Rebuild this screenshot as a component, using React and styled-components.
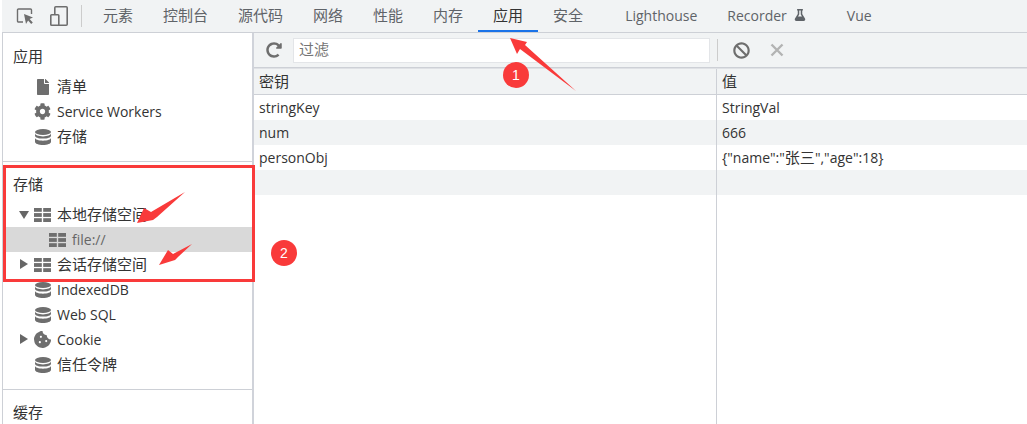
import React from 'react';
import styled, { createGlobalStyle } from 'styled-components';
import { FaBan, FaCog, FaCookieBite, FaFile, FaFlask, FaRedoAlt } from 'react-icons/fa';

const GlobalStyle = createGlobalStyle`
  html, body { margin: 0; padding: 0; background: #fff; }
  body {
    font-family: "Open Sans", "Noto Sans CJK SC", sans-serif;
    font-size: 14px;
    color: #333;
  }
`;

const tabs = [
  { label: '元素' }, { label: '控制台' }, { label: '源代码' }, { label: '网络' },
  { label: '性能' }, { label: '内存' }, { label: '应用', active: true }, { label: '安全' },
];

const Cjk = styled.span`
  font-size: 15px;
  margin-bottom: 2px;
`;

const rows = [
  { key: 'stringKey', value: 'StringVal' },
  { key: 'num', value: '666' },
  { key: 'personObj', value: <>{'{"name":"'}<Cjk>张三</Cjk>{'","age":18}'}</> },
  { key: '', value: '' },
];

const Page = styled.div`
  position: relative;
  width: 1027px;
  height: 424px;
  overflow: hidden;
  padding-left: 2px;
  box-sizing: border-box;
  display: flex;
  flex-direction: column;
`;

const TopBar = styled.div`
  height: 32px;
  flex: none;
  display: flex;
  align-items: center;
  padding-left: 6px;
  background: #f1f3f4;
  border-bottom: 1px solid #cdd0d6;
`;

const IconSlot = styled.div`
  width: ${(p) => p.$width || 34}px;
  height: 32px;
  flex: none;
  display: flex;
  align-items: center;
  justify-content: center;
`;

const ToolDivider = styled.div`
  width: 1px;
  height: 22px;
  flex: none;
  margin: ${(p) => p.$margin};
  background: #ccc;
`;

const Tab = styled.div`
  height: 32px;
  box-sizing: border-box;
  padding: 0 15px ${(p) => (p.$latin ? 0 : 2)}px;
  margin-left: ${(p) => p.$gap || 0}px;
  display: flex;
  align-items: center;
  gap: 7px;
  font-size: ${(p) => (p.$latin ? 14 : 15)}px;
  color: ${(p) => (p.$active ? '#333' : '#5f6368')};
  border-bottom: 2px solid ${(p) => (p.$active ? '#1a73e8' : 'transparent')};
`;

const Main = styled.div`
  flex: 1;
  min-height: 0;
  display: flex;
  border-left: 1px solid #cdd0d6;
`;

const Sidebar = styled.div`
  width: 249px;
  flex: none;
  border-right: 2px solid #d0d3da;
  overflow: hidden;
`;

const Section = styled.div`
  padding: ${(p) => p.$top}px 0 ${(p) => p.$bottom}px;
  border-bottom: ${(p) => (p.$last ? 'none' : '1px solid #cdd0d6')};
`;

const Heading = styled.div`
  height: 24px;
  line-height: 22px;
  padding-left: 10px;
  margin-bottom: 5px;
  font-size: 15px;
  color: #333;
`;

const TreeRow = styled.div`
  height: 25px;
  display: flex;
  align-items: center;
  padding-left: ${(p) => (p.$child ? 46 : 31)}px;
  position: relative;
  background: ${(p) => (p.$selected ? '#d9d9d9' : 'transparent')};
  color: ${(p) => (p.$selected ? '#666' : '#333')};
  white-space: nowrap;
`;

const Caret = styled.span`
  position: absolute;
  left: ${(p) => (p.$open ? 16 : 17)}px;
  top: ${(p) => (p.$open ? 9 : 7)}px;
  width: 0;
  height: 0;
  ${(p) =>
    p.$open
      ? 'border-left: 5px solid transparent; border-right: 5px solid transparent; border-top: 8px solid #666;'
      : 'border-top: 5px solid transparent; border-bottom: 5px solid transparent; border-left: 8px solid #666;'}
`;

const RowIcon = styled.span`
  width: 17px;
  height: 16px;
  flex: none;
  margin-right: 6px;
  display: flex;
  align-items: center;
  justify-content: center;
  color: #6e6e6e;
`;

const Content = styled.div`
  flex: 1;
  min-width: 0;
  display: flex;
  flex-direction: column;
`;

const FilterBar = styled.div`
  height: 34px;
  flex: none;
  display: flex;
  align-items: center;
  background: #f1f3f4;
  border-bottom: 1px solid #cdd0d6;
`;

const FilterInput = styled.div`
  width: 417px;
  height: 25px;
  flex: none;
  box-sizing: border-box;
  padding-left: 5px;
  line-height: 21px;
  background: #fff;
  border: 1px solid #e3e5e8;
  font-size: 15px;
  color: #757575;
`;

const GridHeader = styled.div`
  height: 27px;
  flex: none;
  display: grid;
  grid-template-columns: 462px 1fr;
  background: #f1f3f4;
  border-top: 1px solid #dfe1e5;
  border-bottom: 1px solid #cdd0d6;
  box-sizing: border-box;
`;

const GridRow = styled.div`
  height: 25px;
  flex: none;
  display: grid;
  grid-template-columns: 462px 1fr;
  background: ${(p) => (p.$odd ? '#f1f3f4' : '#fff')};
`;

const Cell = styled.div`
  padding-left: 5px;
  line-height: 25px;
  color: #333;
  white-space: nowrap;
  & + & { border-left: 1px solid #cdd0d6; padding-left: 5px; }
`;

const Filler = styled.div`
  flex: 1;
  display: grid;
  grid-template-columns: 462px 1fr;
  & > div + div { border-left: 1px solid #cdd0d6; }
`;

const RedBox = styled.div`
  position: absolute;
  left: 3px;
  top: 165px;
  width: 252px;
  height: 117px;
  box-sizing: border-box;
  border: 3px solid #f93a3a;
`;

const Badge = styled.div`
  position: absolute;
  left: ${(p) => p.$x - 13}px;
  top: ${(p) => p.$y - 13}px;
  width: 26px;
  height: 26px;
  border-radius: 50%;
  background: #f93a3a;
  color: #fff;
  font-size: 14px;
  font-family: "Liberation Sans", sans-serif;
  line-height: 26px;
  text-align: center;
`;

const ArrowLayer = styled.svg`
  position: absolute;
  left: 0;
  top: 0;
  pointer-events: none;
`;

function InspectIcon() {
  return (
    <svg width="20" height="20" viewBox="0 0 20 20" fill="none">
      <path d="M8 16H3.5a1 1 0 0 1-1-1V4a1 1 0 0 1 1-1h12a1 1 0 0 1 1 1v4" stroke="#6e6e6e" strokeWidth="1.4" />
      <path d="M9 8l9 3.6-3.4 1.4 3.2 3.4-1.6 1.5-3.1-3.4L11 18z" fill="#6e6e6e" />
    </svg>
  );
}

function DeviceIcon() {
  return (
    <svg width="20" height="22" viewBox="0 0 20 22" fill="none" stroke="#6e6e6e" strokeWidth="1.6">
      <rect x="5.8" y="1.8" width="12.4" height="18.4" rx="1" />
      <rect x="1.8" y="9.8" width="8" height="10.4" fill="#f1f3f4" rx="0.8" />
    </svg>
  );
}

function TableIcon() {
  return (
    <svg width="17" height="14" viewBox="0 0 17 14" fill="#6e6e6e">
      <rect x="0" y="0" width="7.8" height="3.8" />
      <rect x="9.2" y="0" width="7.8" height="3.8" />
      <rect x="0" y="5.1" width="7.8" height="3.8" />
      <rect x="9.2" y="5.1" width="7.8" height="3.8" />
      <rect x="0" y="10.2" width="7.8" height="3.8" />
      <rect x="9.2" y="10.2" width="7.8" height="3.8" />
    </svg>
  );
}

function DbIcon() {
  return (
    <svg width="16" height="16" viewBox="0 0 16 16" fill="#6e6e6e">
      <ellipse cx="8" cy="3" rx="8" ry="3" />
      <path d="M0 4.6v2.1C0 8.4 3.6 9.6 8 9.6s8-1.2 8-2.9V4.6C16 6.2 12.4 7.4 8 7.4S0 6.2 0 4.6z" />
      <path d="M0 8.8v3.9C0 14.6 3.6 16 8 16s8-1.4 8-3.3V8.8c0 1.7-3.6 2.9-8 2.9S0 10.5 0 8.8z" />
    </svg>
  );
}

function CloseIcon() {
  return (
    <svg width="14" height="14" viewBox="0 0 14 14" stroke="#b3b3b3" strokeWidth="2.4">
      <path d="M1.5 1.5l11 11M12.5 1.5l-11 11" />
    </svg>
  );
}

function Arrows() {
  return (
    <ArrowLayer width="1027" height="424" viewBox="0 0 1027 424" fill="#f93a3a">
      <polygon points="510,38 527,42 525,45 576,91 520,49 517,54" />
      <polygon points="137,223 144,208 151,212 185,192 157,217 153,220" />
      <polygon points="159,265 168,250 173,254 192,244 178,257 175,260" />
    </ArrowLayer>
  );
}

export default function App() {
  return (
    <Page>
      <GlobalStyle />
      <TopBar>
        <IconSlot><InspectIcon /></IconSlot>
        <IconSlot><DeviceIcon /></IconSlot>
        <ToolDivider $margin="0 6px 0 5px" />
        {tabs.map((t) => (
          <Tab key={t.label} $active={t.active}>{t.label}</Tab>
        ))}
        <Tab $latin $gap={12}>Lighthouse</Tab>
        <Tab $latin>Recorder<FaFlask size={12} /></Tab>
        <Tab $latin $gap={11}>Vue</Tab>
      </TopBar>
      <Main>
        <Sidebar>
          <Section $top={12} $bottom={12}>
            <Heading>应用</Heading>
            <TreeRow><RowIcon><FaFile size={16} /></RowIcon><Cjk>清单</Cjk></TreeRow>
            <TreeRow><RowIcon><FaCog size={17} /></RowIcon>Service Workers</TreeRow>
            <TreeRow><RowIcon><DbIcon /></RowIcon><Cjk>存储</Cjk></TreeRow>
          </Section>
          <Section $top={11} $bottom={12}>
            <Heading>存储</Heading>
            <TreeRow><Caret $open /><RowIcon><TableIcon /></RowIcon><Cjk>本地存储空间</Cjk></TreeRow>
            <TreeRow $child $selected><RowIcon><TableIcon /></RowIcon>file://</TreeRow>
            <TreeRow><Caret /><RowIcon><TableIcon /></RowIcon><Cjk>会话存储空间</Cjk></TreeRow>
            <TreeRow><RowIcon><DbIcon /></RowIcon>IndexedDB</TreeRow>
            <TreeRow><RowIcon><DbIcon /></RowIcon>Web SQL</TreeRow>
            <TreeRow><Caret /><RowIcon><FaCookieBite size={17} /></RowIcon>Cookie</TreeRow>
            <TreeRow><RowIcon><DbIcon /></RowIcon><Cjk>信任令牌</Cjk></TreeRow>
          </Section>
          <Section $top={11} $bottom={0} $last>
            <Heading>缓存</Heading>
          </Section>
        </Sidebar>
        <Content>
          <FilterBar>
            <IconSlot $width={39}><FaRedoAlt size={16} color="#6e6e6e" /></IconSlot>
            <FilterInput>过滤</FilterInput>
            <ToolDivider $margin="0 15px 0 7px" />
            <FaBan size={17} color="#6e6e6e" />
            <IconSlot $width={53}><CloseIcon /></IconSlot>
          </FilterBar>
          <GridHeader>
            <Cell><Cjk>密钥</Cjk></Cell>
            <Cell><Cjk>值</Cjk></Cell>
          </GridHeader>
          {rows.map((r, i) => (
            <GridRow key={i} $odd={i % 2 === 1}>
              <Cell>{r.key}</Cell>
              <Cell>{r.value}</Cell>
            </GridRow>
          ))}
          <Filler><div /><div /></Filler>
        </Content>
      </Main>
      <RedBox />
      <Arrows />
      <Badge $x={516} $y={75}>1</Badge>
      <Badge $x={284} $y={253}>2</Badge>
    </Page>
  );
}
